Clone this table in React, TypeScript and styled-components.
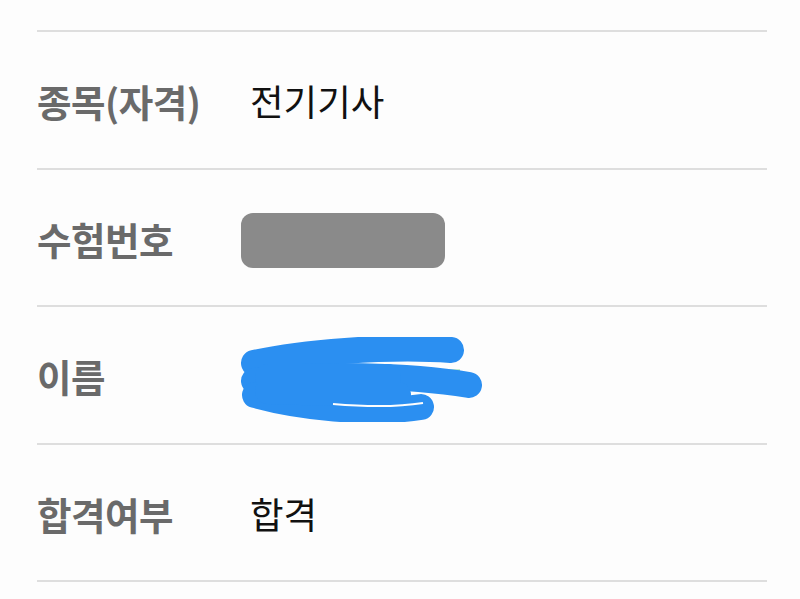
import * as React from 'react'
import styled, { createGlobalStyle } from 'styled-components'

const GlobalStyle = createGlobalStyle`
  html, body {
    margin: 0;
    padding: 0;
    background: #fdfdfd;
  }
  body {
    font-family: "Noto Sans CJK KR", "Noto Sans", sans-serif;
  }
`

const ROWS = [
    { label: '종목(자격)', kind: 'text', value: '전기기사' },
    { label: '수험번호', kind: 'masked' },
    { label: '이름', kind: 'scribble' },
    { label: '합격여부', kind: 'text', value: '합격' },
]

const Page = styled.div`
  width: 800px;
  height: 599px;
  overflow: hidden;
  padding: 30px 33px 0 37px;
  box-sizing: border-box;
`

const Table = styled.div`
  display: flex;
  flex-direction: column;
  border-bottom: 2px solid #dedede;
`

const Row = styled.div`
  display: grid;
  grid-template-columns: 213px 1fr;
  align-items: center;
  height: 135.5px;
  border-top: 2px solid #dedede;
`

const Label = styled.div`
  font-size: 37.5px;
  font-weight: 700;
  color: #6a6a6a;
  letter-spacing: -0.5px;
  padding-top: 2px;
`

const Value = styled.div`
  font-size: 36.5px;
  font-weight: 400;
  color: #111;
  padding-top: 2px;
`

const Masked = styled.div`
  width: 204px;
  height: 55px;
  margin-left: -9px;
  margin-top: 6px;
  border-radius: 12px;
  background: #8a8a8a;
`

const ScribbleBox = styled.div`
  margin-left: -12px;
  margin-top: 10px;
  height: 85px;
`

const Scribble = () => (
    <svg width="260" height="85" viewBox="0 0 260 85">
        <line x1="196" y1="34" x2="222" y2="34" stroke="#8fd69a" strokeWidth="3" />
        <g fill="none" stroke="#2b8ff1" strokeLinecap="round" strokeWidth="26">
            <path d="M 16 26 C 60 16, 150 8, 213 13" />
            <path d="M 16 44 C 80 36, 170 38, 231 48" />
            <path d="M 17 58 C 60 70, 130 78, 183 70" />
            <path d="M 30 40 L 150 40 M 30 54 L 160 58" />
        </g>
        <path d="M 95 67 C 130 70, 160 70, 185 66" fill="none" stroke="#fdfdfd" strokeWidth="2" />
    </svg>
)

const App = () => {
    return (
        <Page>
            <GlobalStyle />
            <Table>
                {ROWS.map(row => (
                    <Row key={row.label}>
                        <Label>{row.label}</Label>
                        {row.kind === 'text' && <Value>{row.value}</Value>}
                        {row.kind === 'masked' && <Masked />}
                        {row.kind === 'scribble' && <ScribbleBox><Scribble /></ScribbleBox>}
                    </Row>
                ))}
            </Table>
        </Page>
    )
}

export default App
